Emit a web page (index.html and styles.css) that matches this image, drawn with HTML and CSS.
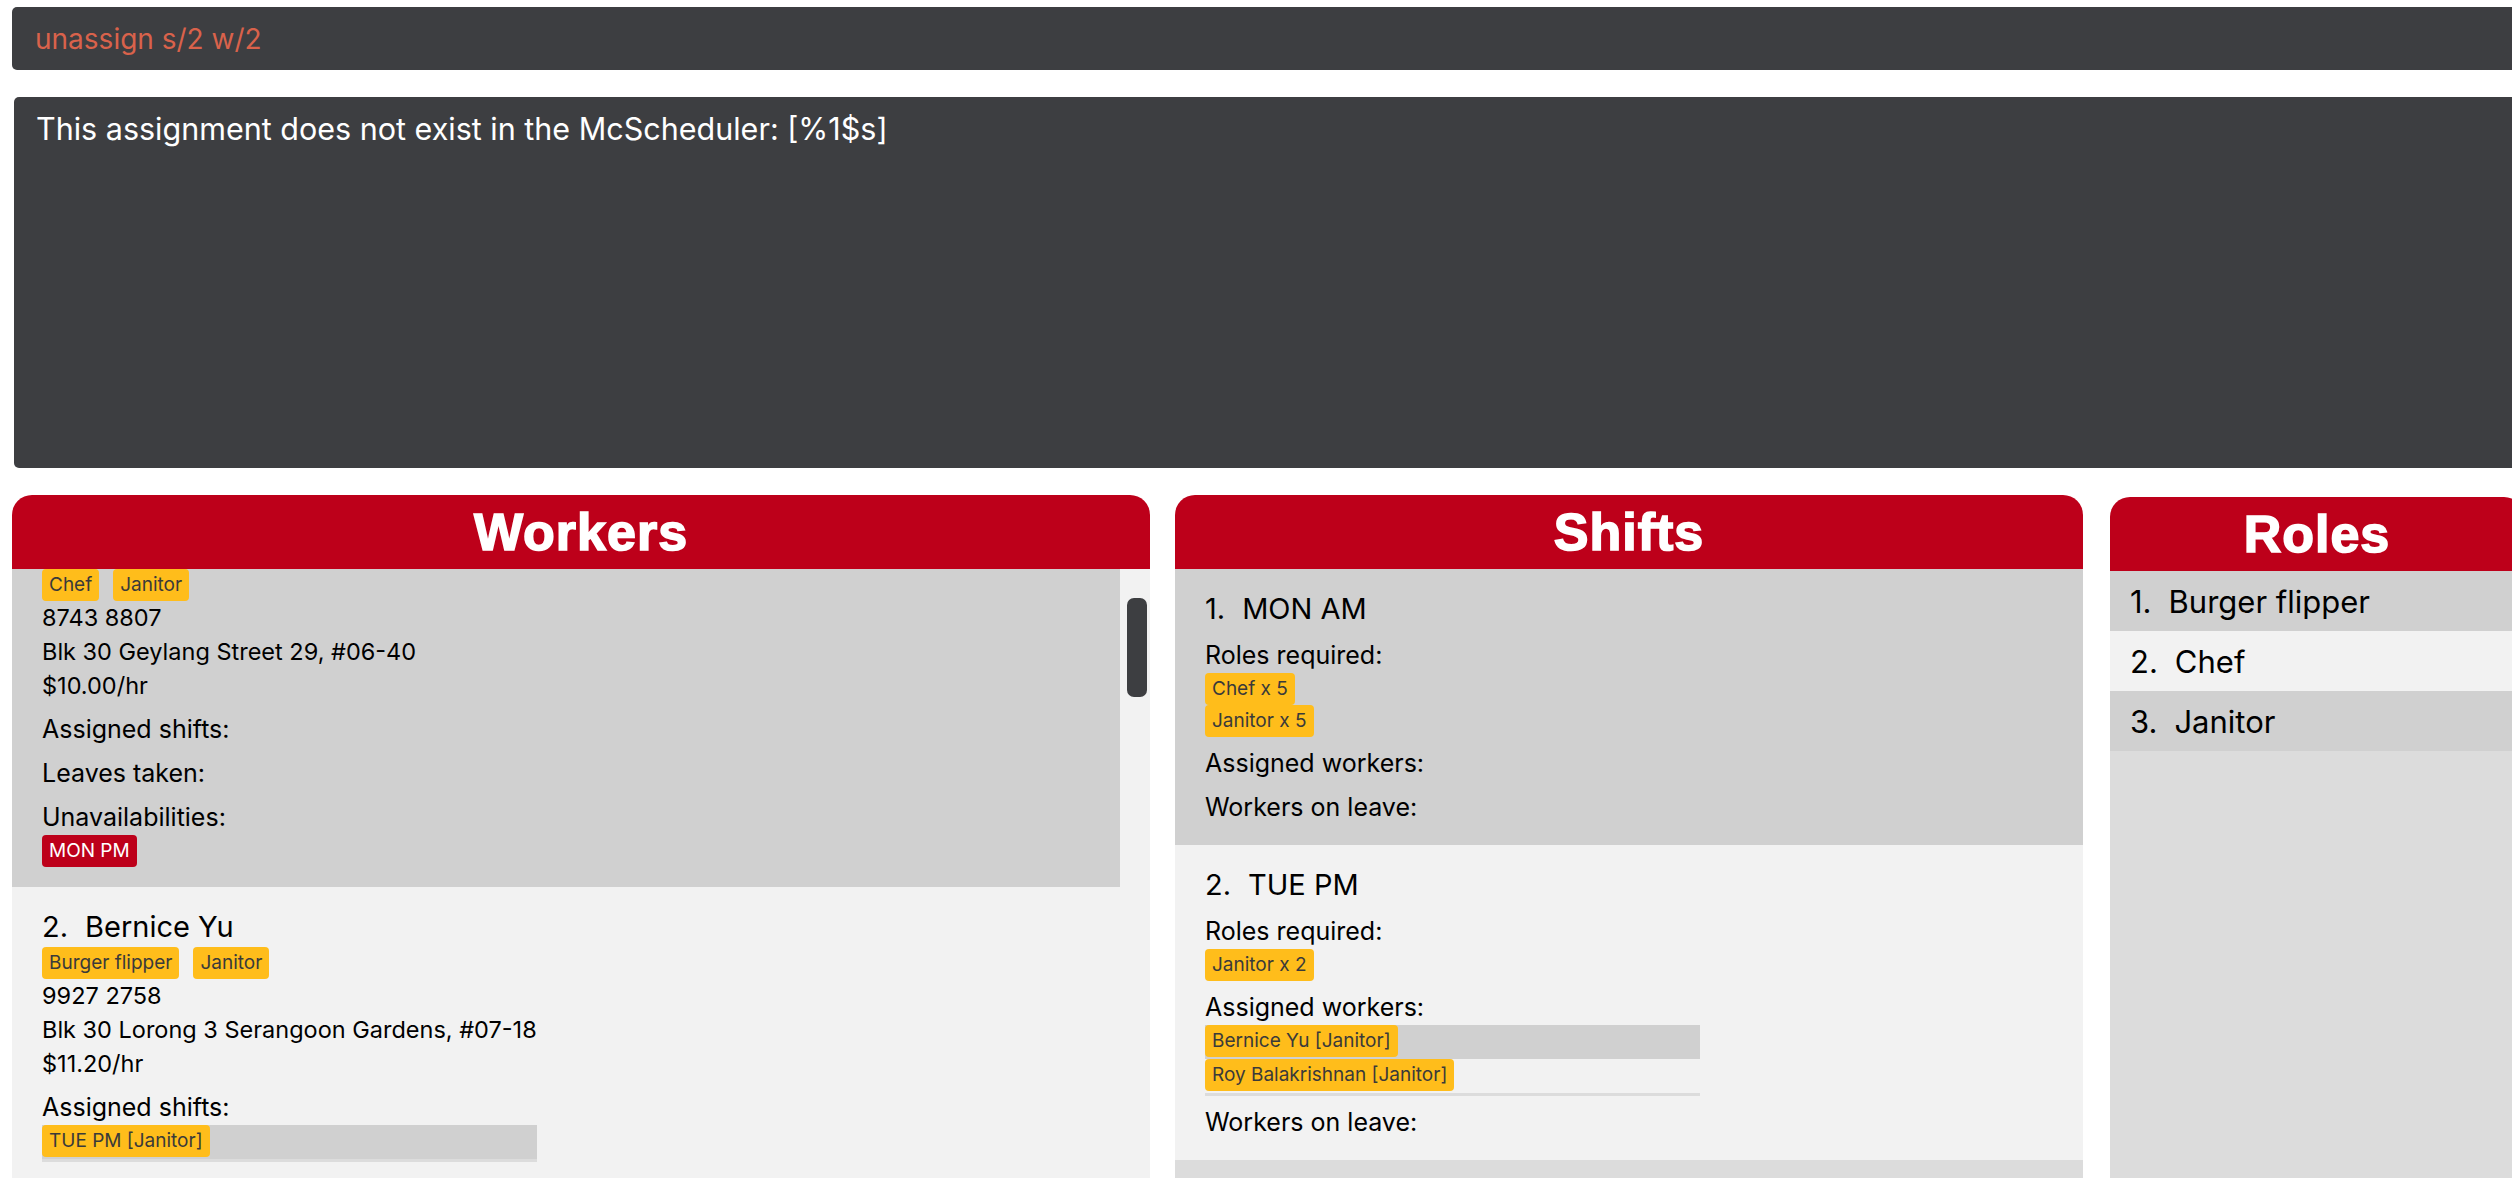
FILE: index.html
```html
<!DOCTYPE html>
<html lang="en">
<head>
<meta charset="utf-8">
<title>McScheduler</title>
<link rel="stylesheet" href="styles.css">
</head>
<body>
<div class="app">
  <div class="command-box"><span class="command-text">unassign s/2 w/2</span></div>
  <div class="result-box"><p class="result-text">This assignment does not exist in the McScheduler: [%1$s]</p></div>
  <div class="panels">
    <section class="panel panel-workers">
      <header class="panel-header"><h2 class="panel-title">Workers</h2></header>
      <div class="panel-body">
        <div class="list">
          <article class="card card-odd">
            <div class="chips">
              <span class="chip">Chef</span>
              <span class="chip">Janitor</span>
            </div>
            <div class="details">
              <div class="detail">8743 8807</div>
              <div class="detail">Blk 30 Geylang Street 29, #06-40</div>
              <div class="detail">$10.00/hr</div>
            </div>
            <div class="section"><div class="label">Assigned shifts:</div></div>
            <div class="section"><div class="label">Leaves taken:</div></div>
            <div class="section">
              <div class="label">Unavailabilities:</div>
              <div class="chips"><span class="chip chip-red">MON PM</span></div>
            </div>
          </article>
          <article class="card card-even">
            <div class="name"><span class="idx">2.</span><span>Bernice Yu</span></div>
            <div class="chips">
              <span class="chip">Burger flipper</span>
              <span class="chip">Janitor</span>
            </div>
            <div class="details">
              <div class="detail">9927 2758</div>
              <div class="detail">Blk 30 Lorong 3 Serangoon Gardens, #07-18</div>
              <div class="detail">$11.20/hr</div>
            </div>
            <div class="section">
              <div class="label">Assigned shifts:</div>
              <div class="sublist">
                <div class="cell cell-odd"><span class="chip">TUE PM [Janitor]</span></div>
              </div>
            </div>
            <div class="section"><div class="label">Leaves taken:</div></div>
          </article>
        </div>
        <div class="scroll-track"><div class="scroll-thumb"></div></div>
      </div>
    </section>

    <section class="panel panel-shifts">
      <header class="panel-header"><h2 class="panel-title">Shifts</h2></header>
      <div class="panel-body">
        <div class="list">
          <article class="card card-odd card-top">
            <div class="name"><span class="idx">1.</span><span>MON AM</span></div>
            <div class="section">
              <div class="label">Roles required:</div>
              <div class="chips chips-column">
                <span class="chip">Chef x 5</span>
                <span class="chip">Janitor x 5</span>
              </div>
            </div>
            <div class="section"><div class="label">Assigned workers:</div></div>
            <div class="section"><div class="label">Workers on leave:</div></div>
          </article>
          <article class="card card-even card-top">
            <div class="name"><span class="idx">2.</span><span>TUE PM</span></div>
            <div class="section">
              <div class="label">Roles required:</div>
              <div class="chips chips-column">
                <span class="chip">Janitor x 2</span>
              </div>
            </div>
            <div class="section">
              <div class="label">Assigned workers:</div>
              <div class="sublist">
                <div class="cell cell-odd"><span class="chip">Bernice Yu [Janitor]</span></div>
                <div class="cell cell-even"><span class="chip">Roy Balakrishnan [Janitor]</span></div>
              </div>
            </div>
            <div class="section"><div class="label">Workers on leave:</div></div>
          </article>
        </div>
      </div>
    </section>

    <section class="panel panel-roles">
      <header class="panel-header"><h2 class="panel-title">Roles</h2></header>
      <div class="panel-body">
        <div class="list">
          <div class="role-row row-odd"><span class="idx">1.</span><span>Burger flipper</span></div>
          <div class="role-row row-even"><span class="idx">2.</span><span>Chef</span></div>
          <div class="role-row row-odd"><span class="idx">3.</span><span>Janitor</span></div>
        </div>
      </div>
    </section>
  </div>
</div>
</body>
</html>
```

FILE: styles.css
```css
html, body {
  margin: 0;
  padding: 0;
  background: #ffffff;
  overflow: hidden;
}

body {
  width: 2512px;
  height: 1178px;
  font-family: "Inter", "Noto Sans", sans-serif;
  color: #000000;
}

.app {
  width: 2600px;
  padding: 7px 0 0 12px;
  box-sizing: border-box;
  display: flex;
  flex-direction: column;
}

.command-box {
  height: 63px;
  background: #3d3e41;
  border-radius: 5px;
  display: flex;
  align-items: center;
  padding-left: 23px;
  box-sizing: border-box;
}

.command-text {
  font-size: 28px;
  color: #d9624b;
}

.result-box {
  margin-top: 27px;
  margin-left: 2px;
  height: 371px;
  background: #3d3e41;
  border-radius: 5px;
  padding: 12px 0 0 22px;
  box-sizing: border-box;
}

.result-text {
  margin: 0;
  font-size: 30.5px;
  line-height: 40px;
  color: #ffffff;
}

.panels {
  margin-top: 27px;
  display: flex;
  align-items: flex-start;
  height: 700px;
}

.panel {
  display: flex;
  flex-direction: column;
  height: 700px;
}

.panel-workers { width: 1138px; }
.panel-shifts { width: 908px; margin-left: 25px; }
.panel-roles { width: 414px; margin-left: 27px; margin-top: 2px; }

.panel-header {
  height: 74px;
  flex: none;
  background: #bd001a;
  border-radius: 20px 20px 0 0;
  display: flex;
  align-items: center;
  justify-content: center;
}

.panel-title {
  margin: 0;
  font-family: "Liberation Sans", Arial, sans-serif;
  font-weight: bold;
  font-size: 52px;
  color: #ffffff;
  -webkit-text-stroke: 1.6px #ffffff;
  letter-spacing: 1px;
}

.panel-body {
  flex: 1;
  display: flex;
  overflow: hidden;
  background: #dcdcdc;
}

.panel-workers .panel-body { background: #f2f2f2; }

.list {
  flex: 1;
  display: flex;
  flex-direction: column;
  overflow: hidden;
}

.card {
  padding: 20px 30px;
}

.panel-workers .card-odd { padding-top: 0; }

.card-odd { background: #d0d0d0; }
.card-even { background: #f2f2f2; }

.name {
  display: flex;
  gap: 17px;
  font-size: 29px;
  line-height: 40px;
  color: #000;
}

.chips {
  display: flex;
  gap: 14px;
  align-items: flex-start;
}

.chips-column {
  flex-direction: column;
  gap: 0;
}

.chip {
  display: inline-block;
  height: 32px;
  line-height: 32px;
  padding: 0 7px;
  background: #ffbd1b;
  color: #3a3a3a;
  font-size: 19px;
  border-radius: 4px;
  white-space: nowrap;
}

.chip-red {
  background: #bd001a;
  color: #ffffff;
}

.detail {
  font-size: 23.5px;
  line-height: 34px;
}

.section {
  padding-top: 8px;
}

.label {
  font-size: 25px;
  line-height: 36px;
}

.sublist {
  width: 495px;
  background: #dcdcdc;
  padding-bottom: 3px;
}

.cell {
  height: 34px;
}

.cell-odd { background: #d0d0d0; }
.cell-even { background: #f2f2f2; }

.scroll-track {
  width: 30px;
  flex: none;
  background: #f2f2f2;
  padding: 29px 0 0 7px;
  box-sizing: border-box;
}

.scroll-thumb {
  width: 20px;
  height: 99px;
  background: #3d3e41;
  border-radius: 7px;
}

.role-row {
  height: 60px;
  display: flex;
  align-items: center;
  gap: 17px;
  padding-left: 20px;
  font-size: 31px;
}

.row-odd { background: #d0d0d0; }
.row-even { background: #f2f2f2; }
```
